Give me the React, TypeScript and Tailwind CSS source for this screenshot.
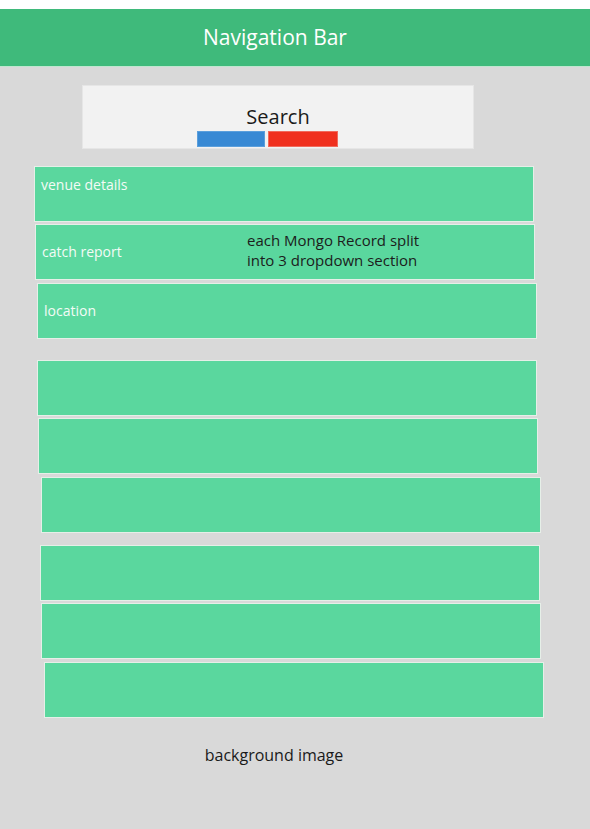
import React from 'react';

interface RowProps {
  offset: string;
  label?: string;
  labelTop?: boolean;
  note?: boolean;
}

const rows: RowProps[] = [
  { offset: 'ml-[34px] mt-[17px]', label: 'venue details', labelTop: true },
  { offset: 'ml-[35px] mt-[2px]', label: 'catch report', note: true },
  { offset: 'ml-[37px] mt-[3px]', label: 'location' },
  { offset: 'ml-[37px] mt-[21px]' },
  { offset: 'ml-[38px] mt-[2px]' },
  { offset: 'ml-[41px] mt-[3px]' },
  { offset: 'ml-[40px] mt-[12px]' },
  { offset: 'ml-[41px] mt-[2px]' },
  { offset: 'ml-[44px] mt-[3px]' },
];

const Row: React.FC<RowProps> = ({ offset, label, labelTop, note }) => {
  return (
    <div
      className={`${offset} w-[500px] h-[56px] bg-[#5ad79e] border border-[#e6efe8] flex ${
        labelTop ? 'items-start pt-[8px]' : 'items-center'
      } pl-[6px]`}
    >
      {label && <span className="w-[205px] text-[14px] leading-[20px] text-[#f4fbf6]">{label}</span>}
      {note && (
        <div className="mb-[4px] text-[15px] leading-[20px] text-[#1c1c1c]">
          <div>each Mongo Record split</div>
          <div>into 3 dropdown section</div>
        </div>
      )}
    </div>
  );
};

export default function App() {
  return (
    <div className="min-h-[829px] bg-[#d9d9d9] font-['Open_Sans',sans-serif] flex flex-col">
      <div className="h-[9px] bg-white" />

      {/* Nav */}
      <div className="h-[58px] bg-[#3fba7b] border-b border-[#bfe6cf] flex items-center justify-center pr-[40px]">
        <span className="text-[21px] text-white">Navigation Bar</span>
      </div>

      {/* Search */}
      <div className="ml-[82px] mt-[18px] w-[392px] h-[64px] bg-[#f2f2f2] border border-[#e6e6e6] flex flex-col pt-[18px]">
        <div className="text-center text-[20px] leading-[26px] text-[#1a1a1a]">Search</div>
        <div className="flex gap-[3px] ml-[114px] mt-[1px]">
          <div className="w-[68px] h-[16px] bg-[#3889d4] border border-[#5b9fdc]" />
          <div className="w-[70px] h-[16px] bg-[#f0301e] border border-[#f06a5c]" />
        </div>
      </div>

      {/* Records */}
      <div className="flex flex-col">
        {rows.map((r, i) => (
          <Row key={i} {...r} />
        ))}
      </div>

      <div className="mt-[25px] w-[548px] text-center text-[16px] leading-[24px] text-[#1a1a1a]">background image</div>
    </div>
  );
}
